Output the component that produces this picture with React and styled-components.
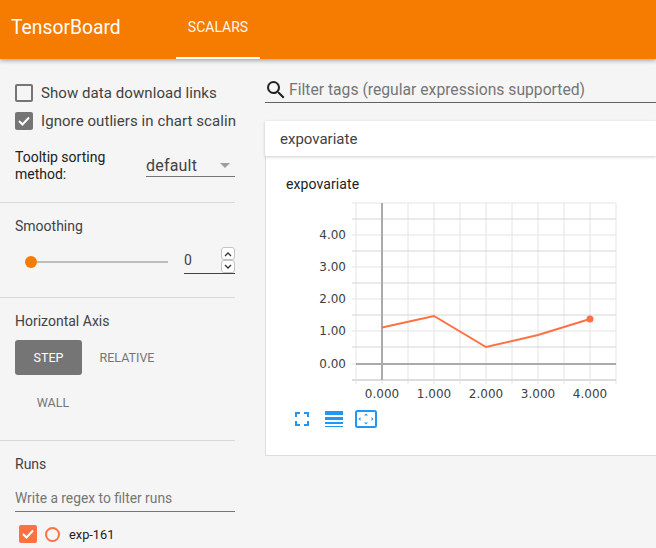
import styled, { createGlobalStyle } from 'styled-components';

const GlobalStyle = createGlobalStyle`
  html, body {
    margin: 0;
    padding: 0;
    background: #f5f5f5;
    font-family: Roboto, "Liberation Sans", sans-serif;
  }
`;
const Page = styled.div`
  width: 656px;
  height: 548px;
  overflow: hidden;
  display: flex;
  flex-direction: column;
  background: #f5f5f5;
`;
const Header = styled.header`
  height: 59px;
  flex: none;
  display: flex;
  background: #f57c00;
  color: #fff;
  box-shadow: 0 2px 4px rgba(0, 0, 0, 0.3);
  position: relative;
  z-index: 2;
`;
const Brand = styled.div`
  width: 176px;
  padding: 16px 0 0 11px;
  box-sizing: border-box;
  font-size: 19.3px;
  line-height: 23px;
`;
const Tab = styled.div`
  width: 84px;
  height: 59px;
  box-sizing: border-box;
  padding-top: 18px;
  border-bottom: 2px solid #fff;
  text-align: center;
  font-size: 14px;
  line-height: 18px;
  color: rgba(255, 255, 255, 0.95);
`;
const Body = styled.div`
  flex: 1;
  display: flex;
  min-height: 0;
`;
const Sidebar = styled.aside`
  width: 235px;
  flex: none;
  margin-right: 30px;
`;
const Section = styled.section`
  padding: ${(props) => props.pad || '14px 0 0 15px'};
  height: ${(props) => props.h}px;
  box-sizing: border-box;
  border-bottom: ${(props) => (props.last ? 'none' : '1px solid #d9d9d9')};
`;
const CheckRow = styled.div`
  display: flex;
  align-items: center;
  height: 28px;
  width: 221px;
  overflow: hidden;
  white-space: nowrap;
  font-size: 15px;
  letter-spacing: 0.07px;
  color: #424242;
`;
const Box = styled.span`
  width: 18px;
  height: 18px;
  flex: none;
  margin: 0 8px 0 0;
  box-sizing: border-box;
  border-radius: 2px;
  border: 2px solid #757575;
  background: ${(props) => (props.on ? '#757575' : 'transparent')};
  display: flex;
  align-items: center;
  justify-content: center;
`;
const SortRow = styled.div`
  display: flex;
  margin-top: 14px;
`;
const SortLabel = styled.div`
  width: 131px;
  font-size: 14px;
  line-height: 17px;
  color: #212121;
`;
const Dropdown = styled.div`
  width: 89px;
  height: 27px;
  box-sizing: border-box;
  margin-top: 1px;
  padding-top: 5px;
  border-bottom: 1px solid #757575;
  display: flex;
  justify-content: space-between;
  align-items: center;
  font-size: 16px;
  letter-spacing: 0.2px;
  color: #424242;
`;
const Caret = styled.span`
  width: 0;
  height: 0;
  margin-right: 5px;
  border-left: 5px solid transparent;
  border-right: 5px solid transparent;
  border-top: 5px solid #9e9e9e;
`;
const SectionTitle = styled.div`
  font-size: 14px;
  line-height: 18px;
  color: #424242;
`;
const SliderRow = styled.div`
  display: flex;
  align-items: flex-start;
  margin-top: 16px;
`;
const Slider = styled.div`
  width: 143px;
  height: 12px;
  margin: 5px 0 0 10px;
  display: flex;
  align-items: center;
  position: relative;
`;
const Track = styled.div`
  width: 100%;
  height: 2px;
  background: #bdbdbd;
`;
const Thumb = styled.span`
  position: absolute;
  left: 0;
  top: 0;
  width: 12px;
  height: 12px;
  border-radius: 50%;
  background: #f57c00;
`;
const NumberBox = styled.div`
  width: 51px;
  height: 27px;
  margin-left: 16px;
  margin-top: -4px;
  box-sizing: border-box;
  border-bottom: 1px solid #424242;
  display: flex;
  justify-content: space-between;
  font-size: 14px;
  line-height: 26px;
  color: #424242;
`;
const Spinner = styled.div`
  display: flex;
  flex-direction: column;
  width: 14px;
`;
const SpinBtn = styled.span`
  width: 14px;
  height: 13px;
  box-sizing: border-box;
  border: 1px solid #c4c4c4;
  border-radius: 3px;
  background: #fff;
  display: flex;
  align-items: center;
  justify-content: center;
`;
const AxisButtons = styled.div`
  display: grid;
  grid-template-columns: 67px 90px;
  margin-top: 10px;
`;
const AxisButton = styled.div`
  height: 35px;
  display: flex;
  align-items: center;
  justify-content: center;
  border-radius: 3px;
  font-size: 12.5px;
  background: ${(props) => (props.active ? '#757575' : 'transparent')};
  color: ${(props) => (props.active ? '#fff' : '#757575')};
`;
const WallRow = styled(AxisButton)`
  width: 76px;
  margin-top: 10px;
`;
const RegexInput = styled.div`
  width: 220px;
  height: 29px;
  margin-top: 10px;
  box-sizing: border-box;
  border-bottom: 1px solid #757575;
  font-size: 13.8px;
  line-height: 30px;
  color: #757575;
`;
const RunRow = styled.div`
  display: flex;
  align-items: center;
  margin: 13px 0 0 4px;
  font-size: 12.8px;
  color: #212121;
`;
const RunBox = styled.span`
  width: 18px;
  height: 18px;
  border-radius: 2px;
  background: #ff7043;
  display: flex;
  align-items: center;
  justify-content: center;
`;
const RunDot = styled.span`
  width: 15px;
  height: 15px;
  margin: 0 9px 0 8px;
  box-sizing: border-box;
  border-radius: 50%;
  border: 2px solid #ff7043;
`;
const Main = styled.main`
  flex: 1;
  min-width: 0;
`;
const FilterBar = styled.div`
  height: 24px;
  margin: 19px 0 18px;
  display: flex;
  align-items: center;
  gap: 1px;
  border-bottom: 1px solid #616161;
  font-size: 15.7px;
  color: #757575;
  box-sizing: content-box;
  svg {
    margin-left: -1px;
    flex: none;
  }
`;
const FilterText = styled.span`
  margin-top: -2px;
`;
const CategoryHead = styled.div`
  height: 35px;
  padding-left: 15px;
  background: #fff;
  box-shadow: 0 1px 3px rgba(0, 0, 0, 0.2);
  font-size: 15px;
  line-height: 36px;
  color: #424242;
  position: relative;
`;
const Card = styled.div`
  height: 300px;
  box-sizing: border-box;
  background: #fff;
  border-left: 1px solid #ddd;
  border-bottom: 1px solid #ddd;
  padding: 20px 0 0 20px;
`;
const CardTitle = styled.div`
  font-size: 14px;
  line-height: 16px;
  letter-spacing: 0.1px;
  color: #212121;
`;
const ChartSvg = styled.svg`
  display: block;
  margin: 7px 0 0 -21px;
`;
const Tools = styled.div`
  display: flex;
  align-items: center;
  height: 18px;
  margin: 6px 0 0 9px;
`;
const ToolIcon = styled.svg`
  flex: none;
  margin-right: ${(props) => props.gap || 0}px;
`;

const gridX = [356, 382, 408, 434, 460, 486, 512, 538, 564, 590, 616];
const gridY = [203, 219, 235, 251, 267, 283, 299, 315, 331, 347, 364, 380];
const yLabels = [['4.00', 235], ['3.00', 267], ['2.00', 299], ['1.00', 331], ['0.00', 364]];
const xLabels = [['0.000', 382], ['1.000', 434], ['2.000', 486], ['3.000', 538], ['4.000', 590]];
const OX = 265;
const OY = 199;

const Tick = () => (
  <svg width="12" height="10" viewBox="0 0 12 10" fill="none" stroke="#fff" strokeWidth="2">
    <path d="M1 5l3.5 3.5L11 1.5" />
  </svg>
);

const Chart = () => (
  <ChartSvg width="391" height="205" viewBox={`${OX} ${OY} 391 205`}>
    {gridX.map((x) => (
      <line key={x} x1={x} x2={x} y1={203} y2={384} stroke="#e4e4e4" />
    ))}
    {gridY.map((y, i) => (
      <line key={y} x1={352} x2={616} y1={y} y2={y} stroke={i % 2 === 0 ? '#e4e4e4' : '#d6d6d6'} />
    ))}
    <line x1={352} x2={616} y1={380} y2={380} stroke="#ddd" strokeWidth="2" />
    <line x1={382} x2={382} y1={203} y2={380} stroke="#aaa" strokeWidth="2" />
    <line x1={356} x2={616} y1={364} y2={364} stroke="#aaa" strokeWidth="2" />
    {yLabels.map(([t, y]) => (
      <text key={t} x={346} y={y + 4} textAnchor="end" fontFamily="DejaVu Sans" fontSize="12" fill="#3c4043">
        {t}
      </text>
    ))}
    {xLabels.map(([t, x]) => (
      <text key={t} x={x} y={398} textAnchor="middle" fontFamily="DejaVu Sans" fontSize="12" fill="#3c4043">
        {t}
      </text>
    ))}
    <polyline points="382,327.5 434,316 486,347 538,335 590,319" fill="none" stroke="#ff7043" strokeWidth="2" />
    <circle cx="590" cy="319" r="3.5" fill="#ff7043" />
  </ChartSvg>
);

const App = () => {
  return (
    <Page>
      <GlobalStyle />
      <Header>
        <Brand>TensorBoard</Brand>
        <Tab>SCALARS</Tab>
      </Header>
      <Body>
        <Sidebar>
          <Section h={144} pad="20px 0 0 15px">
            <CheckRow>
              <Box />
              Show data download links
            </CheckRow>
            <CheckRow>
              <Box on>
                <Tick />
              </Box>
              Ignore outliers in chart scaling
            </CheckRow>
            <SortRow>
              <SortLabel>
                Tooltip sorting
                <br />
                method:
              </SortLabel>
              <Dropdown>
                default
                <Caret />
              </Dropdown>
            </SortRow>
          </Section>
          <Section h={95}>
            <SectionTitle>Smoothing</SectionTitle>
            <SliderRow>
              <Slider>
                <Track />
                <Thumb />
              </Slider>
              <NumberBox>
                0
                <Spinner>
                  <SpinBtn>
                    <svg width="8" height="6" viewBox="0 0 8 6" fill="none" stroke="#333" strokeWidth="1.3">
                      <path d="M1 5l3-3 3 3" />
                    </svg>
                  </SpinBtn>
                  <SpinBtn>
                    <svg width="8" height="6" viewBox="0 0 8 6" fill="none" stroke="#333" strokeWidth="1.3">
                      <path d="M1 1l3 3 3-3" />
                    </svg>
                  </SpinBtn>
                </Spinner>
              </NumberBox>
            </SliderRow>
          </Section>
          <Section h={143}>
            <SectionTitle>Horizontal Axis</SectionTitle>
            <AxisButtons>
              <AxisButton active>STEP</AxisButton>
              <AxisButton>RELATIVE</AxisButton>
            </AxisButtons>
            <WallRow>WALL</WallRow>
          </Section>
          <Section h={110} last>
            <SectionTitle>Runs</SectionTitle>
            <RegexInput>Write a regex to filter runs</RegexInput>
            <RunRow>
              <RunBox>
                <Tick />
              </RunBox>
              <RunDot />
              exp-161
            </RunRow>
          </Section>
        </Sidebar>
        <Main>
          <FilterBar>
            <svg width="24" height="24" viewBox="0 0 24 24" fill="#212121">
              <path d="M15.5 14h-.79l-.28-.27A6.471 6.471 0 0 0 16 9.5 6.5 6.5 0 1 0 9.5 16c1.61 0 3.09-.59 4.23-1.57l.27.28v.79l5 4.99L20.49 19l-4.99-5zm-6 0C7.01 14 5 11.99 5 9.5S7.01 5 9.5 5 14 7.01 14 9.5 11.99 14 9.5 14z" />
            </svg>
            <FilterText>Filter tags (regular expressions supported)</FilterText>
          </FilterBar>
          <CategoryHead>expovariate</CategoryHead>
          <Card>
            <CardTitle>expovariate</CardTitle>
            <Chart />
            <Tools>
              <ToolIcon gap={16} width="14" height="14" viewBox="0 0 14 14" fill="none" stroke="#2196f3" strokeWidth="2">
                <path d="M1 5V1h4M9 1h4v4M13 9v4H9M5 13H1V9" />
              </ToolIcon>
              <ToolIcon gap={12} width="18" height="16" viewBox="0 0 18 16" fill="#2196f3">
                <rect y="0" width="18" height="4" />
                <rect y="6" width="18" height="3" />
                <rect y="11" width="18" height="2" />
                <rect y="15" width="18" height="1" />
              </ToolIcon>
              <ToolIcon width="22" height="18" viewBox="0 0 22 18" fill="#2196f3">
                <rect x="1" y="1" width="20" height="16" rx="1.5" fill="none" stroke="#2196f3" strokeWidth="2" />
                <path d="M11 3.5l2 2H9zM11 14.5l2-2H9zM3.5 9l2-2v4zM18.5 9l-2-2v4z" />
              </ToolIcon>
            </Tools>
          </Card>
        </Main>
      </Body>
    </Page>
  );
};

export default App;
